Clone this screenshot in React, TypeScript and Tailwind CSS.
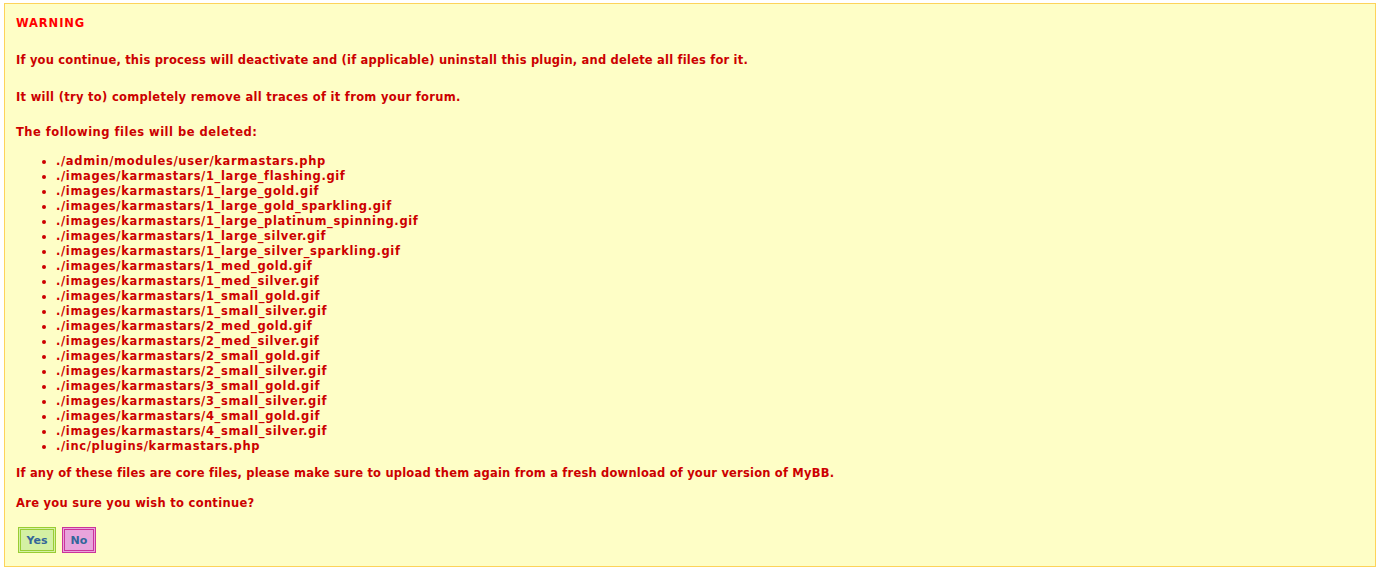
const files = [
    "./admin/modules/user/karmastars.php",
    "./images/karmastars/1_large_flashing.gif",
    "./images/karmastars/1_large_gold.gif",
    "./images/karmastars/1_large_gold_sparkling.gif",
    "./images/karmastars/1_large_platinum_spinning.gif",
    "./images/karmastars/1_large_silver.gif",
    "./images/karmastars/1_large_silver_sparkling.gif",
    "./images/karmastars/1_med_gold.gif",
    "./images/karmastars/1_med_silver.gif",
    "./images/karmastars/1_small_gold.gif",
    "./images/karmastars/1_small_silver.gif",
    "./images/karmastars/2_med_gold.gif",
    "./images/karmastars/2_med_silver.gif",
    "./images/karmastars/2_small_gold.gif",
    "./images/karmastars/2_small_silver.gif",
    "./images/karmastars/3_small_gold.gif",
    "./images/karmastars/3_small_silver.gif",
    "./images/karmastars/4_small_gold.gif",
    "./images/karmastars/4_small_silver.gif",
    "./inc/plugins/karmastars.php",
];

const App = () => {
    return (
        <div className="bg-white w-[1380px] h-[573px] pt-[3px] pl-[4px] font-['DejaVu_Sans',Verdana,sans-serif] font-bold text-[11.5px] leading-[15px]">
            <div className="w-[1372px] h-[564px] border border-[#fdd35a] bg-[#fefec6] pt-[12px] px-[11px] text-[#cc0000]">
                <div className="text-[#ff0000] tracking-[0.9px]">WARNING</div>
                <div className="mt-[22px] tracking-[0.2px]">
                    If you continue, this process will deactivate and (if applicable) uninstall this plugin, and delete all files for it.
                </div>
                <div className="mt-[22px] tracking-[0.3px]">It will (try to) completely remove all traces of it from your forum.</div>
                <div className="mt-[20px] tracking-[0.5px]">The following files will be deleted:</div>
                <ul className="mt-[14px] pl-[40px] list-disc tracking-[0.65px]">
                    {files.map(file => (
                        <li key={file} className="h-[15px]">{file}</li>
                    ))}
                </ul>
                <div className="mt-[12px] tracking-[0.2px]">
                    If any of these files are core files, please make sure to upload them again from a fresh download of your version of MyBB.
                </div>
                <div className="mt-[15px] tracking-[0.3px]">Are you sure you wish to continue?</div>
                <div className="flex gap-[6px] mt-[16px] ml-[2px]">
                    <button className="w-[38px] h-[26px] border-[3px] border-double border-[#99cc33] bg-[#d4f0a4] text-[#336699] font-bold text-[11px]">
                        Yes
                    </button>
                    <button className="w-[34px] h-[26px] border-[3px] border-double border-[#cc3399] bg-[#e8a4dc] text-[#336699] font-bold text-[11px]">
                        No
                    </button>
                </div>
            </div>
        </div>
    );
};

export default App;
